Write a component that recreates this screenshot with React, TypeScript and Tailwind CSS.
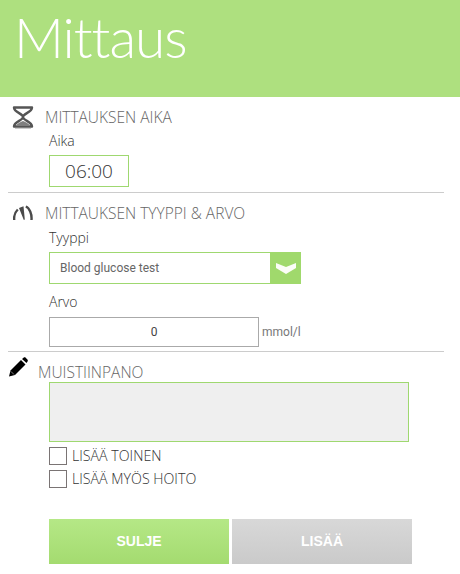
import React from "react";

const Hourglass = () => (
  <svg width="22" height="24" viewBox="0 0 22 24" className="block">
    <path d="M2 2.500h18c0 5-9 6-9 9.500s9 4.500 9 9.500H2c0-5 9-6 9-9.500s-9-4.500-9-9.500z" fill="none" stroke="#555" strokeWidth="2.400" strokeLinejoin="round" />
    <path d="M4 20.500c1.500-2.500 5-3.500 7-4.500 2 1 5.500 2 7 4.500z" fill="#808080" />
    <path d="M3 23.500h16" stroke="#ccc" strokeWidth="1" />
  </svg>
);

const Gauge = () => (
  <svg width="20" height="16" viewBox="0 0 20 16" className="block">
    <path d="M1.200 15C.8 11 2.200 7 4.800 4.500" fill="none" stroke="#4a4a4a" strokeWidth="2.400" />
    <path d="M6 3 10.500 1.200 11.800 14.500 10.800 15z" fill="#4a4a4a" />
    <path d="M12.800 1.500C16.500 3 19 9 18.500 15" fill="none" stroke="#4a4a4a" strokeWidth="2.400" />
  </svg>
);

const Pencil = () => (
  <svg width="20" height="20" viewBox="0 0 20 20" className="block">
    <path d="M1 19.500 2.500 13.500 13 3 17.500 7.500 7 18z" fill="#000" />
    <path d="M14 2 15.500 .8c.8-.6 1.500-.6 2.200 0l1.700 1.700c.6.7.6 1.400 0 2.200L18.500 6z" fill="#000" />
    <path d="M3 14.500 6 17.500" stroke="#fff" strokeWidth=".5" />
  </svg>
);

const light = "font-['Open_Sans',sans-serif] font-light";

export default function App() {
  return (
    <div className="w-[460px] h-[574px] bg-white overflow-hidden font-['Open_Sans',sans-serif] text-[#444]">
      <header className="h-[97px] bg-[#aee07f] pl-[14px]">
        <h1 className="font-['Lato',sans-serif] font-light text-[55px] tracking-[-1px] leading-[74px] text-white">Mittaus</h1>
      </header>

      <section className="ml-[8px] w-[436px] h-[96px] border-b border-[#ccc]">
        <div className="flex items-center h-[40px] pl-[4px]">
          <Hourglass />
          <h2 className={`${light} ml-[11px] text-[15.500px] leading-[20px] -mt-[1px] text-[#666]`}>MITTAUKSEN AIKA</h2>
        </div>
        <div className="pl-[41px]">
          <label className="block -mt-[4px] text-[14px] leading-[16px] font-light text-[#333]">Aika</label>
          <div className="mt-[6px] w-[80px] h-[32px] border border-[#9fd870] flex items-center justify-center text-[19px] text-[#333] font-light">
            06:00
          </div>
        </div>
      </section>

      <section className="ml-[8px] w-[436px] h-[159px] border-b border-[#ccc]">
        <div className="flex items-center h-[40px] pl-[5px]">
          <Gauge />
          <h2 className={`${light} ml-[12px] text-[15.500px] leading-[20px] text-[#666]`}>MITTAUKSEN TYYPPI &amp; ARVO</h2>
        </div>
        <div className="pl-[41px]">
          <label className="block -mt-[3px] text-[14px] leading-[16px] font-light text-[#333]">Tyyppi</label>
          <div className="mt-[6px] w-[252px] h-[32px] border border-[#9fd870] flex items-center justify-between">
            <span className="pl-[10px] text-[12px] font-['Roboto',sans-serif] text-[#666]">Blood glucose test</span>
            <span className="w-[31px] h-[32px] bg-[#a0d96c] flex items-center justify-center -mr-px">
              <svg width="20" height="12" viewBox="0 0 20 12"><path d="M0 1 10 5 20 1V6L10 12 0 6z" fill="#fbfdf7" /></svg>
            </span>
          </div>
          <label className="block mt-[10px] text-[14px] leading-[16px] font-light text-[#333]">Arvo</label>
          <div className="mt-[7px] flex items-center">
            <div className="w-[210px] h-[30px] border border-[#aaa] flex items-center justify-center text-[12px] font-['Roboto',sans-serif] text-[#444]">0</div>
            <span className="ml-[3px] text-[12px] font-['Roboto',sans-serif] text-[#777]">mmol/l</span>
          </div>
        </div>
      </section>

      <section className="ml-[8px] w-[436px]">
        <div className="flex items-center h-[30px]">
          <Pencil />
          <h2 className={`${light} ml-[10px] mt-[10px] text-[15.500px] leading-[20px] text-[#666]`}>MUISTIINPANO</h2>
        </div>
        <div className="pl-[41px]">
          <div className="w-[360px] h-[60px] border border-[#9fd870] bg-[#efefef]" />
          <div className="mt-[5px] flex items-center h-[18px]">
            <span className="w-[18px] h-[18px] border border-[#7a7474]" />
            <span className="ml-[5px] text-[14.200px] font-light text-[#333]">LISÄÄ TOINEN</span>
          </div>
          <div className="mt-[5px] flex items-center h-[18px]">
            <span className="w-[18px] h-[18px] border border-[#7a7474]" />
            <span className="ml-[5px] text-[14.200px] font-light text-[#333]">LISÄÄ MYÖS HOITO</span>
          </div>
          <div className="mt-[31px] flex gap-[3px]">
            <button className="w-[180px] h-[45px] bg-gradient-to-b from-[#b5e886] to-[#a4db70] text-white text-[14px] font-bold font-['Liberation_Sans',sans-serif]">SULJE</button>
            <button className="w-[180px] h-[45px] bg-gradient-to-b from-[#d8d8d8] to-[#cacaca] text-white text-[14px] font-bold font-['Liberation_Sans',sans-serif]">LISÄÄ</button>
          </div>
        </div>
      </section>
    </div>
  );
}
